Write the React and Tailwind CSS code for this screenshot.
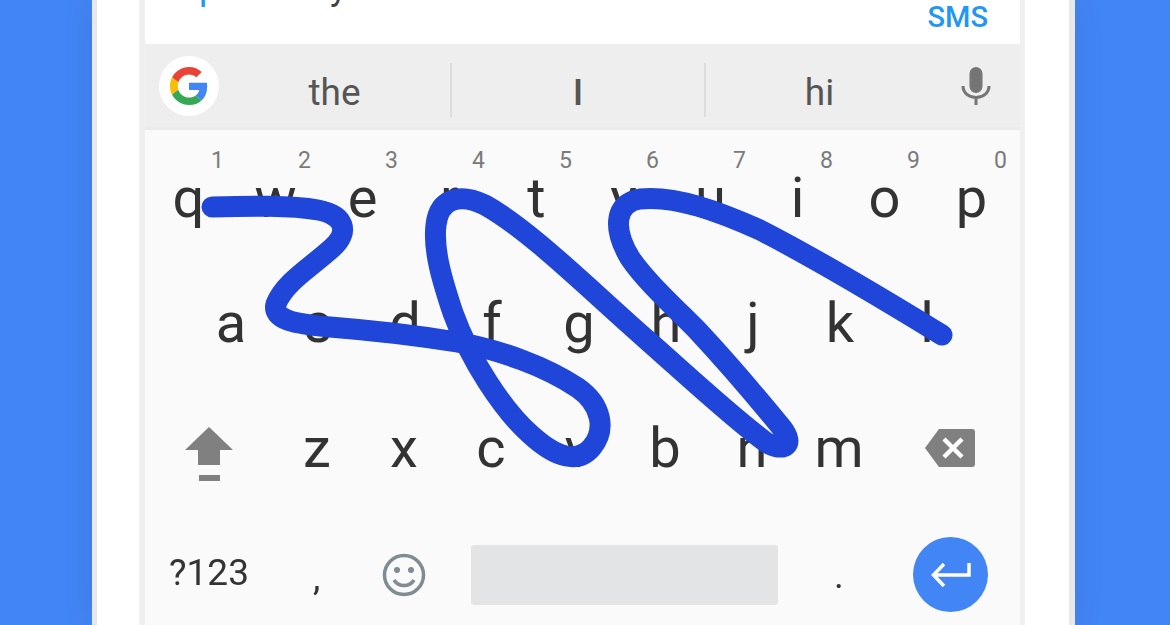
const row1 = [['q', '1'], ['w', '2'], ['e', '3'], ['r', '4'], ['t', '5'], ['y', '6'], ['u', '7'], ['i', '8'], ['o', '9'], ['p', '0']];
const row2 = ['a', 's', 'd', 'f', 'g', 'h', 'j', 'k', 'l'];
const row3 = ['z', 'x', 'c', 'v', 'b', 'n', 'm'];

// swipe trail drawn over the keys, coordinates read off the screenshot
const trail = `M212 207
  C250 206 290 205 318 210
  C345 215 350 232 332 248
  C310 268 285 282 276 304
  C272 320 295 324 330 327
  C380 331 420 336 457 342
  C500 350 545 366 578 388
  C602 405 606 430 592 447
  C578 464 556 458 530 434
  C503 410 470 360 453 313
  C442 280 433 250 436 225
  C439 198 460 193 485 205
  C530 230 590 290 647 340
  C690 378 735 420 767 443
  C785 452 795 445 782 428
  C755 395 725 360 697 330
  C670 303 645 280 630 258
  C612 228 615 203 640 199
  C675 195 720 212 760 230
  C815 258 880 297 942 335`;

function Key({ label, hint }) {
  return (
    <div className="relative w-[87px] shrink-0 flex items-center justify-center text-[56px] leading-none text-[#333333]">
      {label}
      {hint && <span className="absolute top-[13px] right-[8px] text-[23px] leading-none text-[#7a7a7a]">{hint}</span>}
    </div>
  );
}

export default function App() {
  return (
    <div className="h-[625px] overflow-hidden bg-[#4285f4]">
      <div className="relative h-full blur-[0.5px] pl-[92px] pr-[95px] font-['Roboto',sans-serif]">
        <div className="h-full bg-white border-l-[5px] border-r-[6px] border-[#e6e8ec] pl-[42px] pr-[44px] shadow-[0_0_30px_rgba(0,0,0,0.08)]">
          <div className="h-full bg-[#fafafa] border-l-[6px] border-r-[5px] border-[#f0f0f0] flex flex-col">
            {/* message card, cut by the top edge */}
            <div className="relative h-[44px] shrink-0 bg-white overflow-hidden flex items-start justify-end pr-[32px]">
              <span className="absolute left-[54px] top-[-31px] text-[36px] leading-none text-[#2196f3]">p</span>
              <span className="absolute left-[185px] top-[-31px] text-[36px] leading-none text-[#424242]">y</span>
              <span className="text-[29px] font-medium leading-none text-[#2196f3] mt-[3px]">SMS</span>
            </div>

            {/* suggestions */}
            <div className="h-[86px] shrink-0 bg-[#eeeeee] border-b-[3px] border-[#ebebeb] flex items-center pl-[14px] text-[37px] text-[#555555]">
              <div className="w-[60px] h-[60px] rounded-full bg-white flex items-center justify-center shrink-0">
                <svg width="38" height="38" viewBox="0 0 48 48">
                  <path fill="#EA4335" d="M24 9.5c3.54 0 6.71 1.22 9.21 3.6l6.85-6.85C35.9 2.38 30.47 0 24 0 14.62 0 6.51 5.38 2.56 13.22l7.98 6.19C12.43 13.72 17.74 9.5 24 9.5z" />
                  <path fill="#4285F4" d="M46.98 24.55c0-1.57-.15-3.09-.38-4.55H24v9.02h12.94c-.58 2.96-2.26 5.48-4.78 7.18l7.73 6c4.51-4.18 7.09-10.36 7.09-17.65z" />
                  <path fill="#FBBC05" d="M10.53 28.59c-.48-1.45-.76-2.99-.76-4.59s.27-3.14.76-4.59l-7.98-6.19C.92 16.46 0 20.12 0 24c0 3.88.92 7.54 2.56 10.78l7.97-6.19z" />
                  <path fill="#34A853" d="M24 48c6.48 0 11.93-2.13 15.89-5.81l-7.73-6c-2.15 1.45-4.92 2.3-8.16 2.3-6.26 0-11.57-4.22-13.47-9.91l-7.98 6.19C6.51 42.62 14.62 48 24 48z" />
                </svg>
              </div>
              <div className="w-[231px] text-center pt-[14px]">the</div>
              <div className="w-[2px] h-[54px] mt-[8px] bg-[#dddddd]" />
              <div className="w-[252px] text-center font-medium pt-[14px]">I</div>
              <div className="w-[2px] h-[54px] mt-[8px] bg-[#dddddd]" />
              <div className="w-[227px] text-center pt-[14px]">hi</div>
              <svg className="ml-[28px]" width="30" height="40" viewBox="0 0 30 40" fill="none">
                <rect x="8.5" y="1" width="13" height="26" rx="6.5" fill="#757575" />
                <path d="M2 20c0 7 6 11.5 13 11.5S28 27 28 20M15 31v8" stroke="#757575" strokeWidth="3" />
              </svg>
            </div>

            {/* letters */}
            <div className="flex-1 min-h-0 flex flex-col pt-[5.5px]">
              <div className="h-[125px] shrink-0 flex">
                {row1.map(([k, n]) => <Key key={k} label={k} hint={n} />)}
              </div>
              <div className="h-[125px] shrink-0 flex pl-[42.5px]">
                {row2.map((k) => <Key key={k} label={k} />)}
              </div>
              <div className="h-[125px] shrink-0 flex items-stretch">
                <div className="w-[128.5px] flex items-center justify-center pt-[13px]">
                  <svg width="50" height="56" viewBox="0 0 50 56">
                    <path fill="#808080" d="M25 0 49 23H36V38H14V23H1Z" />
                    <rect x="15" y="48" width="21" height="6" fill="#808080" />
                  </svg>
                </div>
                {row3.map((k) => <Key key={k} label={k} />)}
                <div className="flex-1 flex items-center justify-center pr-[2px]">
                  <svg width="52" height="38" viewBox="0 0 52 38">
                    <path fill="#808080" d="M15 0H48a3 3 0 0 1 3 3V35a3 3 0 0 1-3 3H15L1 19Z" />
                    <path stroke="#fff" strokeWidth="4.5" d="M20 10 38 28M38 10 20 28" />
                  </svg>
                </div>
              </div>
              <div className="h-[128px] shrink-0 flex items-center">
                <div className="w-[128px] text-center text-[37px] leading-none text-[#333333] mb-[5px]">?123</div>
                <div className="w-[87.5px] text-center text-[37px] leading-none text-[#333333] mt-[6px]">,</div>
                <div className="w-[87.5px] flex justify-center">
                  <svg width="44" height="44" viewBox="0 0 44 44" fill="none">
                    <circle cx="22" cy="22" r="19.5" stroke="#7f8c92" strokeWidth="3.5" />
                    <circle cx="15" cy="17" r="3" fill="#7f8c92" />
                    <circle cx="29" cy="17" r="3" fill="#7f8c92" />
                    <path d="M12 27c2.5 4 6 5.5 10 5.5s7.5-1.500 10-5.500" stroke="#7f8c92" strokeWidth="3.5" />
                  </svg>
                </div>
                <div className="ml-[23px] w-[307px] h-[60px] rounded-[3px] bg-[#e3e4e6]" />
                <div className="w-[122px] text-center text-[37px] leading-none text-[#333333] mt-[2px]">.</div>
                <div className="ml-[13px] w-[75px] h-[75px] rounded-full bg-[#4285f4] flex items-center justify-center">
                  <svg width="42" height="26" viewBox="0 0 42 26" fill="none">
                    <path d="M39 1V13H4M14 2 3.5 13 14 24" stroke="#fff" strokeWidth="3.5" />
                  </svg>
                </div>
              </div>
            </div>
          </div>
        </div>

        <svg className="absolute inset-0 pointer-events-none" width="1170" height="625" fill="none">
          <path d={trail} stroke="#1f45d9" strokeWidth="21" strokeLinecap="round" strokeLinejoin="round" />
        </svg>
      </div>
    </div>
  );
}
